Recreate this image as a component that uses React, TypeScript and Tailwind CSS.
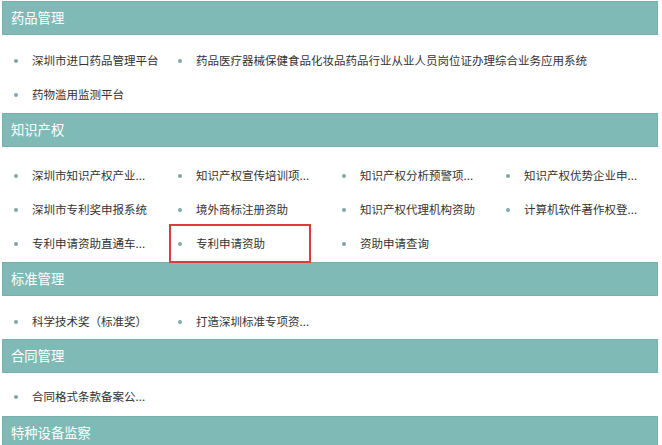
import React from 'react'

type Item = { text: string; span?: number; marked?: boolean }
type Section = { title: string; pad: string; items: Item[] }

const sections: Section[] = [
  {
    title: '药品管理',
    pad: 'pt-[9px] pb-[1px]',
    items: [
      { text: '深圳市进口药品管理平台' },
      { text: '药品医疗器械保健食品化妆品药品行业从业人员岗位证办理综合业务应用系统', span: 3 },
      { text: '药物滥用监测平台' },
    ],
  },
  {
    title: '知识产权',
    pad: 'pt-[12px] pb-[1px]',
    items: [
      { text: '深圳市知识产权产业...' },
      { text: '知识产权宣传培训项...' },
      { text: '知识产权分析预警项...' },
      { text: '知识产权优势企业申...' },
      { text: '深圳市专利奖申报系统' },
      { text: '境外商标注册资助' },
      { text: '知识产权代理机构资助' },
      { text: '计算机软件著作权登...' },
      { text: '专利申请资助直通车...' },
      { text: '专利申请资助', marked: true },
      { text: '资助申请查询' },
    ],
  },
  {
    title: '标准管理',
    pad: 'pt-[9px] pb-0',
    items: [{ text: '科学技术奖（标准奖）' }, { text: '打造深圳标准专项资...' }],
  },
  {
    title: '合同管理',
    pad: 'pt-[7px] pb-[2px]',
    items: [{ text: '合同格式条款备案公...' }],
  },
  {
    title: '特种设备监察',
    pad: '',
    items: [],
  },
]

const Row = ({ item }: { item: Item }) => (
  <li
    className={`relative flex h-[34px] items-center pl-[12px] ${
      item.span === 3 ? 'col-span-3' : ''
    }`}
  >
    <span className="h-[4px] w-[4px] shrink-0 rounded-full bg-[#7ea9a6]" />
    <span className="ml-[14px] whitespace-nowrap">{item.text}</span>
    {item.marked && (
      <span className="pointer-events-none absolute left-[3px] top-[-3px] h-[39px] w-[142px] border-2 border-[#dc3a40]" />
    )}
  </li>
)

export default function App() {
  return (
    <div
      className="h-[445px] w-[662px] overflow-hidden bg-white px-[2px] pt-[1px] text-[11.5px] text-[#333333]"
      style={{ fontFamily: '"Noto Sans CJK SC", "Microsoft YaHei", sans-serif' }}
    >
      {sections.map((s) => (
        <section key={s.title} className="w-[656px]">
          <div className="flex h-[34px] items-center border border-[#76b0ad] bg-[#7fbab7] pl-[8px] text-[13.3px] text-white">
            {s.title}
          </div>
          {s.items.length > 0 && (
            <ul className={`grid grid-cols-[164px_164px_164px_164px] ${s.pad}`}>
              {s.items.map((it) => (
                <Row key={it.text} item={it} />
              ))}
            </ul>
          )}
        </section>
      ))}
    </div>
  )
}
